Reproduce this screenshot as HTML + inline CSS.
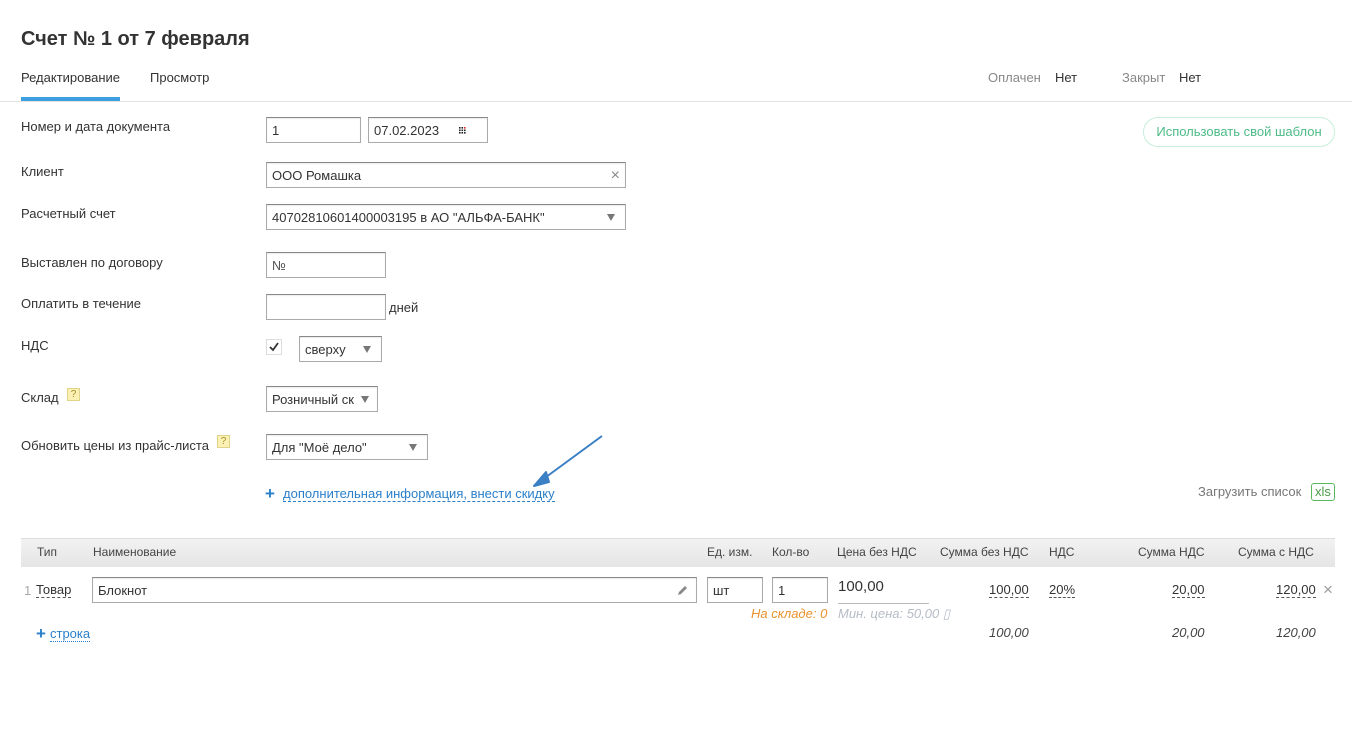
<!DOCTYPE html>
<html><head><meta charset="utf-8"><style>
*{box-sizing:border-box;margin:0;padding:0}
body{width:1352px;height:729px;background:#fff;font-family:"Liberation Sans",Arial,sans-serif;font-size:13px;color:#333;position:relative;overflow:hidden}
.a{position:absolute;white-space:nowrap}
.lbl{position:absolute;left:21px;color:#333}
.inp{position:absolute;border:1px solid #aaa;border-top-color:#888;background:#fff;height:26px;line-height:25px;padding-left:5px;color:#333;box-shadow:inset 0 1px 1px rgba(0,0,0,.08)}
.tri{position:absolute;width:0;height:0;border-left:4px solid transparent;border-right:4px solid transparent;border-top:7px solid #777;top:9px}
.q{position:absolute;width:13px;height:13px;background:#fbf1b5;border:1px solid #e0d38a;color:#a68d2a;font-size:10px;line-height:11px;text-align:center}
.th{position:absolute;top:545px;color:#444;font-size:12px}
.dash{border-bottom:1px dashed #555;line-height:14px}
.it{font-style:italic;color:#444}
</style></head><body>
<div class="a" style="left:21px;top:28px;font-size:20px;font-weight:bold;color:#333">Счет № 1 от 7 февраля</div>
<div class="a" style="left:21px;top:70px">Редактирование</div>
<div class="a" style="left:21px;top:97px;width:99px;height:4px;background:#3d9fe0"></div>
<div class="a" style="left:150px;top:70px">Просмотр</div>
<div class="a" style="left:988px;top:70px;color:#888">Оплачен</div>
<div class="a" style="left:1055px;top:70px;color:#333">Нет</div>
<div class="a" style="left:1122px;top:70px;color:#888">Закрыт</div>
<div class="a" style="left:1179px;top:70px;color:#333">Нет</div>
<div class="a" style="left:0;top:101px;width:1352px;height:1px;background:#e2e2e2"></div>

<div class="lbl" style="top:119px">Номер и дата документа</div>
<div class="inp" style="left:266px;top:117px;width:95px">1</div>
<div class="inp" style="left:368px;top:117px;width:120px">07.02.2023
<svg class="a" style="left:90px;top:9px" width="8" height="7"><g fill="#222"><rect x="0" y="0" width="1.6" height="1.6"/><rect x="2.5" y="0" width="1.6" height="1.6"/><rect x="5" y="0" width="1.6" height="1.6" fill="#d22"/><rect x="0" y="2.5" width="1.6" height="1.6"/><rect x="2.5" y="2.5" width="1.6" height="1.6"/><rect x="5" y="2.5" width="1.6" height="1.6"/><rect x="0" y="5" width="1.6" height="1.6"/><rect x="2.5" y="5" width="1.6" height="1.6"/><rect x="5" y="5" width="1.6" height="1.6"/></g></svg></div>
<div class="a" style="left:1143px;top:117px;width:192px;height:30px;border:1px solid #c8eedb;border-radius:15px;color:#4cbb85;text-align:center;line-height:28px">Использовать свой шаблон</div>

<div class="lbl" style="top:164px">Клиент</div>
<div class="inp" style="left:266px;top:162px;width:360px">ООО Ромашка<span class="a" style="right:5px;top:0;color:#888;font-size:16px">×</span></div>
<div class="lbl" style="top:206px">Расчетный счет</div>
<div class="inp" style="left:266px;top:204px;width:360px">40702810601400003195 в АО "АЛЬФА-БАНК"<span class="tri" style="right:10px"></span></div>

<div class="lbl" style="top:255px">Выставлен по договору</div>
<div class="inp" style="left:266px;top:252px;width:120px;color:#555">№</div>
<div class="lbl" style="top:296px">Оплатить в течение</div>
<div class="inp" style="left:266px;top:294px;width:120px"></div>
<div class="a" style="left:389px;top:300px">дней</div>
<div class="lbl" style="top:338px">НДС</div>
<div class="a" style="left:266px;top:339px;width:16px;height:16px;border:1px solid #ddd"><svg width="14" height="14" style="position:absolute;left:0;top:0"><path d="M3 7 L6 10 L11 3" fill="none" stroke="#333" stroke-width="1.8"/></svg></div>
<div class="inp" style="left:299px;top:336px;width:83px">сверху<span class="tri" style="right:10px"></span></div>

<div class="lbl" style="top:390px">Склад</div>
<div class="q" style="left:67px;top:388px">?</div>
<div class="inp" style="left:266px;top:386px;width:112px;overflow:hidden">Розничный ск<span class="tri" style="right:8px"></span></div>
<div class="lbl" style="top:438px">Обновить цены из прайс-листа</div>
<div class="q" style="left:217px;top:435px">?</div>
<div class="inp" style="left:266px;top:434px;width:162px">Для "Моё дело"<span class="tri" style="right:10px"></span></div>

<div class="a" style="left:265px;top:484px;color:#2a7fc9;font-size:17px;font-weight:bold">+</div>
<div class="a" style="left:283px;top:487px;color:#2a7fc9;border-bottom:1px dashed #2a7fc9;line-height:14px">дополнительная информация, внести скидку</div>
<svg class="a" style="left:0;top:0" width="700" height="500"><line x1="602" y1="436" x2="542" y2="480" stroke="#3b7fc4" stroke-width="2"/><path d="M534 486 L546 472 L549 482 Z" fill="#3b7fc4" stroke="#3b7fc4" stroke-width="2" stroke-linejoin="round"/></svg>

<div class="a" style="left:1198px;top:484px;color:#777">Загрузить список</div>
<div class="a" style="left:1311px;top:483px;width:24px;height:18px;border:1px solid #5cb85c;border-radius:3px;color:#4a9a4a;text-align:center;line-height:16px">xls</div>

<div class="a" style="left:21px;top:538px;width:1314px;height:29px;background:linear-gradient(#f2f2f2,#e5e5e5);border-top:1px solid #ddd"></div>
<div class="th" style="left:37px">Тип</div>
<div class="th" style="left:93px">Наименование</div>
<div class="th" style="left:707px">Ед. изм.</div>
<div class="th" style="left:772px">Кол-во</div>
<div class="th" style="left:837px">Цена без НДС</div>
<div class="th" style="left:940px">Сумма без НДС</div>
<div class="th" style="left:1049px">НДС</div>
<div class="th" style="left:1138px">Сумма НДС</div>
<div class="th" style="left:1238px">Сумма с НДС</div>

<div class="a" style="left:24px;top:583px;color:#aaa">1</div>
<div class="a dash" style="left:36px;top:583px">Товар</div>
<div class="inp" style="left:92px;top:577px;width:605px">Блокнот
<svg class="a" style="right:8px;top:7px" width="11" height="11"><path d="M1 10 L2 7 L8 1 L10 3 L4 9 Z" fill="#888"/></svg></div>
<div class="inp" style="left:707px;top:577px;width:56px">шт</div>
<div class="inp" style="left:772px;top:577px;width:56px">1</div>
<div class="a" style="left:838px;top:578px;font-size:15px">100,00</div>
<div class="a" style="left:838px;top:603px;width:91px;height:1px;background:#bbb"></div>
<div class="a" style="left:751px;top:606px;color:#e8912d;font-style:italic">На складе: 0</div>
<div class="a" style="left:838px;top:606px;color:#b5bcc6;font-style:italic">Мин. цена: 50,00 ▯</div>
<div class="a dash" style="left:989px;top:583px">100,00</div>
<div class="a dash" style="left:1049px;top:583px">20%</div>
<div class="a dash" style="left:1172px;top:583px">20,00</div>
<div class="a dash" style="left:1276px;top:583px">120,00</div>
<div class="a" style="left:1323px;top:580px;color:#999;font-size:17px">×</div>

<div class="a" style="left:36px;top:624px;color:#2a7fc9;font-size:17px;font-weight:bold">+</div>
<div class="a" style="left:50px;top:627px;color:#2a7fc9;border-bottom:1px dotted #2a7fc9;line-height:14px">строка</div>
<div class="a it" style="left:989px;top:625px">100,00</div>
<div class="a it" style="left:1172px;top:625px">20,00</div>
<div class="a it" style="left:1276px;top:625px">120,00</div>
</body></html>
